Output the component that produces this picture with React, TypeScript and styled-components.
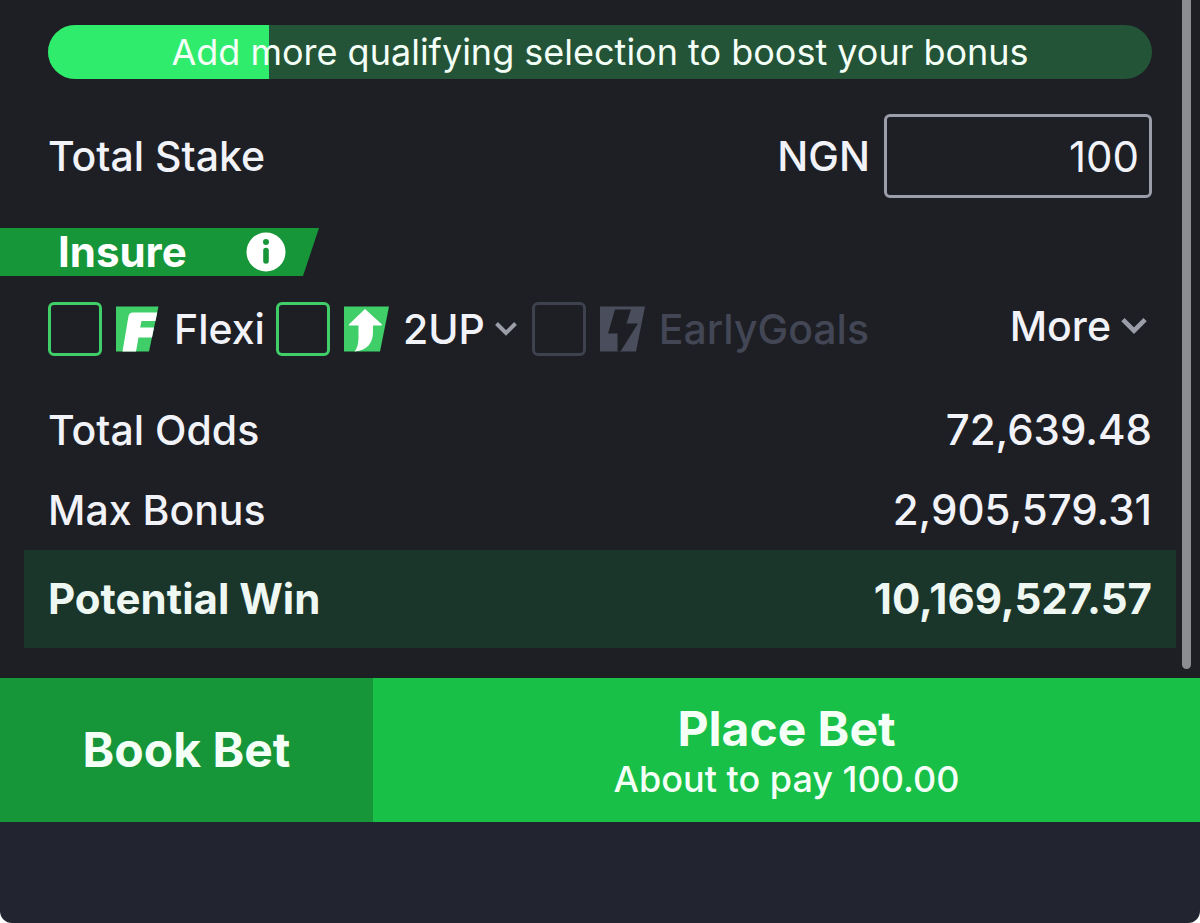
import React, { useState } from "react";
import styled, { createGlobalStyle } from "styled-components";

const GlobalStyle = createGlobalStyle`
  *, *::before, *::after { box-sizing: border-box; }
  body { margin: 0; background: #ffffff; }
  button, input { font: inherit; color: inherit; }
`;

const Sheet = styled.main`
  display: flex;
  flex-direction: column;
  min-height: 100vh;
  overflow: hidden;
  border-radius: 0 0 12px 12px;
  background: #22252f;
  color: #f2f3f8;
  font-family: Inter, "Liberation Sans", sans-serif;
  font-size: 41px;
  font-weight: 500;
  line-height: 48px;
`;

const Slip = styled.section`
  position: relative;
  padding: 25px 24px 30px;
  background: #1d1f25;
`;

const ScrollThumb = styled.div`
  position: absolute;
  top: 0;
  right: 9px;
  bottom: 9px;
  width: 9px;
  border-radius: 0 0 5px 5px;
  background: #8c8d92;
`;

const BoostTrack = styled.div`
  position: relative;
  margin: 0 24px;
  overflow: hidden;
  border-radius: 27px;
  background: #245437;
`;

const BoostFill = styled.div<{ $percent: number }>`
  position: absolute;
  inset: 0 auto 0 0;
  width: ${(p) => p.$percent}%;
  background: #30ec6c;
`;

const BoostText = styled.p`
  position: relative;
  margin: 0;
  color: #f4fff7;
  font-size: 36px;
  font-weight: 400;
  line-height: 54px;
  text-align: center;
`;

const StakeRow = styled.div`
  display: flex;
  align-items: center;
  justify-content: space-between;
  margin: 35px 24px 30px;
`;

const StakeEntry = styled.div`
  display: flex;
  align-items: center;
  gap: 14px;
`;

const StakeInput = styled.input`
  width: 268px;
  height: 84px;
  padding: 0 10px;
  border: 3px solid #9b9da8;
  border-radius: 6px;
  outline: none;
  background: transparent;
  font-size: 42px;
  font-weight: 400;
  text-align: right;
`;

const InsureRibbon = styled.div`
  display: flex;
  align-items: center;
  justify-content: space-between;
  width: 319px;
  height: 48px;
  margin-left: -24px;
  padding: 0 33px 0 58px;
  background: #169638;
  clip-path: polygon(0 0, 100% 0, calc(100% - 16px) 100%, 0 100%);
  color: #ffffff;
  font-size: 42px;
  font-weight: 700;
`;

const IconButton = styled.button`
  display: flex;
  padding: 0;
  border: 0;
  background: none;
  cursor: pointer;
`;

const FeatureRow = styled.div`
  display: flex;
  align-items: center;
  justify-content: space-between;
  margin: 26px 28px 34px 24px;
`;

const FeatureList = styled.div`
  display: flex;
  align-items: center;
  gap: 11px;
`;

const Feature = styled.div`
  display: flex;
  align-items: center;
  gap: 9px;
  padding-right: 3px;
`;

const FeatureLabel = styled.label<{ $muted?: boolean }>`
  display: flex;
  align-items: center;
  gap: 14px;
  color: ${(p) => (p.$muted ? "#434654" : "inherit")};
`;

const CheckBox = styled.input`
  appearance: none;
  width: 54px;
  height: 54px;
  margin: 0;
  border: 3px solid #3fce68;
  border-radius: 6px;
  background: transparent;

  &:checked { background: #3fce68; }
  &:disabled { border-color: #3e414e; }
`;

const MoreButton = styled.button`
  display: flex;
  align-items: center;
  gap: 9px;
  padding: 0 0 6px;
  border: 0;
  background: none;
  cursor: pointer;
`;

const Totals = styled.dl`
  margin: 0;
`;

const TotalRow = styled.div<{ $highlight?: boolean }>`
  display: flex;
  align-items: center;
  justify-content: space-between;
  height: ${(p) => (p.$highlight ? 98 : 80)}px;
  padding: 0 24px;
  background: ${(p) => (p.$highlight ? "#1a352a" : "transparent")};
  color: ${(p) => (p.$highlight ? "#eef7f2" : "inherit")};
  font-size: ${(p) => (p.$highlight ? 42 : 41)}px;
  font-weight: ${(p) => (p.$highlight ? 700 : 500)};

  dd {
    margin: 0;
    font-size: 42px;
  }
`;

const Actions = styled.div`
  display: grid;
  grid-template-columns: 373fr 827fr;
  height: 144px;
`;

const ActionButton = styled.button<{ $primary?: boolean }>`
  display: flex;
  flex-direction: column;
  align-items: center;
  justify-content: center;
  gap: 2px;
  padding: ${(p) => (p.$primary ? "8px 0 0" : "0")};
  border: 0;
  background: ${(p) => (p.$primary ? "#18c048" : "#169638")};
  color: #f4fff7;
  font-size: 48px;
  font-weight: 700;
  cursor: pointer;
`;

const ActionNote = styled.span`
  font-size: 36px;
  font-weight: 500;
`;

const InfoIcon = () => (
  <svg width="40" height="40" viewBox="0 0 40 40" aria-hidden="true">
    <circle cx="20" cy="20" r="19.5" fill="#ffffff" />
    <circle cx="20" cy="10" r="3" fill="#169638" />
    <path d="M20 18.5V29" stroke="#169638" strokeWidth="5.6" strokeLinecap="round" />
  </svg>
);

const FlexiIcon = () => (
  <svg width="44" height="46" viewBox="0 0 44 46" aria-hidden="true">
    <path d="M0 0.5H42.5L33 45.5H0Z" fill="#3fce68" />
    <path
      d="M12.500 10Q13.200 6.500 17 6.500H41.200L39.500 15H25.500L24.200 21.500H38L36 31.500H22.500L20 45.500H6.500Z"
      fill="#ffffff"
    />
  </svg>
);

const TwoUpIcon = () => (
  <svg width="45" height="46" viewBox="0 0 45 46" aria-hidden="true">
    <path d="M0 0.500H45L36 45.500H0Z" fill="#3fce68" />
    <path
      d="M21 3L38 18.500Q38 19.500 37 19.500H29V26C29 36 24 44.500 10.500 45.500C14 41.500 14.500 36 14.500 30V19.500H5.500Q4.500 19.500 4.800 18.500Z"
      fill="#ffffff"
    />
  </svg>
);

const EarlyGoalsIcon = () => (
  <svg width="45" height="46" viewBox="0 0 45 46" aria-hidden="true">
    <path d="M0 0.500H45L36 45.500H0Z" fill="#4a4d5b" />
    <path d="M15 3.500H31L26.500 17.500H38L20.500 45.500H17.500V27.500H8Z" fill="#1d1f25" />
  </svg>
);

const Chevron = ({ size }: { size: number }) => (
  <svg width={size} height={size} viewBox="0 0 24 24" aria-hidden="true">
    <path d="M2.500 6.500L12 16L21.500 6.500" fill="none" stroke="#9b9da8" strokeWidth="4" />
  </svg>
);

const totals = [
  { label: "Total Odds", value: "72,639.48" },
  { label: "Max Bonus", value: "2,905,579.31" },
  { label: "Potential Win", value: "10,169,527.57", highlight: true },
];

export default function App() {
  const [stake, setStake] = useState("100");

  return (
    <>
      <GlobalStyle />
      <Sheet>
        <Slip>
          <BoostTrack>
            <BoostFill $percent={20} />
            <BoostText>Add more qualifying selection to boost your bonus</BoostText>
          </BoostTrack>

          <StakeRow>
            <label htmlFor="stake">Total Stake</label>
            <StakeEntry>
              <span>NGN</span>
              <StakeInput
                id="stake"
                inputMode="decimal"
                value={stake}
                onChange={(e) => setStake(e.target.value)}
              />
            </StakeEntry>
          </StakeRow>

          <InsureRibbon>
            <span>Insure</span>
            <IconButton type="button" aria-label="About Insure">
              <InfoIcon />
            </IconButton>
          </InsureRibbon>

          <FeatureRow>
            <FeatureList>
              <FeatureLabel>
                <CheckBox type="checkbox" />
                <FlexiIcon />
                Flexi
              </FeatureLabel>
              <Feature>
                <FeatureLabel>
                  <CheckBox type="checkbox" />
                  <TwoUpIcon />
                  2UP
                </FeatureLabel>
                <IconButton type="button" aria-label="2UP options">
                  <Chevron size={24} />
                </IconButton>
              </Feature>
              <FeatureLabel $muted>
                <CheckBox type="checkbox" disabled />
                <EarlyGoalsIcon />
                EarlyGoals
              </FeatureLabel>
            </FeatureList>
            <MoreButton type="button">
              More
              <Chevron size={28} />
            </MoreButton>
          </FeatureRow>

          <Totals>
            {totals.map((row) => (
              <TotalRow key={row.label} $highlight={row.highlight}>
                <dt>{row.label}</dt>
                <dd>{row.value}</dd>
              </TotalRow>
            ))}
          </Totals>
          <ScrollThumb />
        </Slip>

        <Actions>
          <ActionButton type="button">Book Bet</ActionButton>
          <ActionButton type="button" $primary>
            Place Bet
            <ActionNote>About to pay 100.00</ActionNote>
          </ActionButton>
        </Actions>
      </Sheet>
    </>
  );
}
